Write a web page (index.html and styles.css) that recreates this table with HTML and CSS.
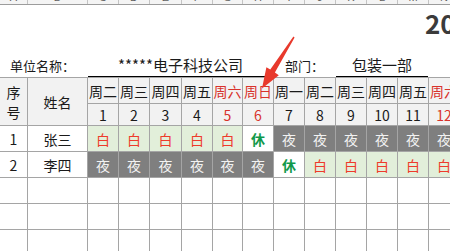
FILE: index.html
```html
<!DOCTYPE html>
<html lang="zh-CN">
<head>
<meta charset="utf-8">
<title>排班表</title>
<link rel="stylesheet" href="styles.css">
</head>
<body>
<div class="sheet">
  <div class="cols colhdr">
    <span><i>A</i></span><span><i>B</i></span><span><i>C</i></span><span><i>D</i></span><span><i>E</i></span><span><i>F</i></span><span><i>G</i></span><span><i>H</i></span><span><i>I</i></span><span><i>J</i></span><span><i>K</i></span><span><i>L</i></span><span><i>M</i></span><span><i>N</i></span>
  </div>
  <div class="title">2020年员工排班表</div>
  <div class="cols info">
    <div class="lbl lbl-unit">单位名称：</div>
    <div class="val val-unit">*****电子科技公司</div>
    <div class="lbl lbl-dept">部门：</div>
    <div class="val val-dept">包装一部</div>
  </div>
  <div class="cols table">
    <div class="c hd seq"><span>序</span><span>号</span></div>
    <div class="c hd name">姓名</div>
    <div class="c hd">周二</div>
    <div class="c hd">周三</div>
    <div class="c hd">周四</div>
    <div class="c hd">周五</div>
    <div class="c hd red">周六</div>
    <div class="c hd red">周日</div>
    <div class="c hd">周一</div>
    <div class="c hd">周二</div>
    <div class="c hd">周三</div>
    <div class="c hd">周四</div>
    <div class="c hd">周五</div>
    <div class="c hd red">周六</div>

    <div class="c hd">1</div>
    <div class="c hd">2</div>
    <div class="c hd">3</div>
    <div class="c hd">4</div>
    <div class="c hd red">5</div>
    <div class="c hd red">6</div>
    <div class="c hd">7</div>
    <div class="c hd">8</div>
    <div class="c hd">9</div>
    <div class="c hd">10</div>
    <div class="c hd">11</div>
    <div class="c hd red">12</div>

    <div class="c">1</div>
    <div class="c">张三</div>
    <div class="c day">白</div>
    <div class="c day">白</div>
    <div class="c day">白</div>
    <div class="c day">白</div>
    <div class="c day">白</div>
    <div class="c rest">休</div>
    <div class="c night">夜</div>
    <div class="c night">夜</div>
    <div class="c night">夜</div>
    <div class="c night">夜</div>
    <div class="c night">夜</div>
    <div class="c night">夜</div>

    <div class="c">2</div>
    <div class="c">李四</div>
    <div class="c night">夜</div>
    <div class="c night">夜</div>
    <div class="c night">夜</div>
    <div class="c night">夜</div>
    <div class="c night">夜</div>
    <div class="c night">夜</div>
    <div class="c rest">休</div>
    <div class="c day">白</div>
    <div class="c day">白</div>
    <div class="c day">白</div>
    <div class="c day">白</div>
    <div class="c day">白</div>

    <div class="c"></div><div class="c"></div><div class="c"></div><div class="c"></div><div class="c"></div><div class="c"></div><div class="c"></div><div class="c"></div><div class="c"></div><div class="c"></div><div class="c"></div><div class="c"></div><div class="c"></div><div class="c"></div>
    <div class="c"></div><div class="c"></div><div class="c"></div><div class="c"></div><div class="c"></div><div class="c"></div><div class="c"></div><div class="c"></div><div class="c"></div><div class="c"></div><div class="c"></div><div class="c"></div><div class="c"></div><div class="c"></div>
    <div class="c"></div><div class="c"></div><div class="c"></div><div class="c"></div><div class="c"></div><div class="c"></div><div class="c"></div><div class="c"></div><div class="c"></div><div class="c"></div><div class="c"></div><div class="c"></div><div class="c"></div><div class="c"></div>
  </div>
  <svg class="arrow" width="450" height="251" viewBox="0 0 450 251" aria-hidden="true">
    <polygon points="294.6,37.4 274.9,72.6 278.8,75.2 262,88.5 266.4,67.2 270.3,69.6 293.4,36.6" fill="#e8392c"/>
  </svg>
</div>
</body>
</html>
```

FILE: styles.css
```css
html, body {
  margin: 0;
  padding: 0;
}
body {
  width: 450px;
  height: 251px;
  overflow: hidden;
  background: #ffffff;
  font-family: "Noto Sans CJK SC", "Noto Sans", sans-serif;
  color: #1a1a1a;
}
.sheet {
  position: relative;
  width: 450px;
  height: 251px;
  overflow: hidden;
}
.cols {
  display: grid;
  grid-template-columns: 27px 59px 30px 30px 31px 30px 29px 30px 30px 30px 30px 30px 30px 30px;
  column-gap: 1px;
}

/* excel column letters strip (cut off) */
.colhdr {
  height: 4px;
  background: #c4c4c4;
  border-bottom: 1px solid #9c9c9c;
}
.colhdr span {
  display: block;
  height: 4px;
  overflow: hidden;
  background: #f4f4f4;
  text-align: center;
}
.colhdr i {
  display: block;
  font-style: normal;
  font-family: "Liberation Sans", sans-serif;
  font-size: 11px;
  line-height: 12px;
  margin-top: -9px;
  color: #606060;
}

.title {
  height: 41px;
  padding: 3px 0 0 425px;
  font-size: 26px;
  font-weight: 700;
  line-height: 30px;
  color: #3b3b3b;
  white-space: nowrap;
}

.info {
  height: 28px;
  align-items: end;
}
.lbl {
  font-size: 13px;
  line-height: 23px;
  white-space: nowrap;
  color: #1a1a1a;
}
.lbl-unit {
  grid-column: 1 / 3;
  padding-left: 10px;
}
.lbl-dept {
  grid-column: 9 / 11;
  padding-left: 11px;
}
.val {
  font-size: 15px;
  line-height: 22px;
  text-align: center;
  border-bottom: 1px solid #000;
  white-space: nowrap;
}
.val-unit {
  grid-column: 3 / 9;
}
.val-dept {
  grid-column: 11 / 14;
}

.table {
  grid-template-rows: 25px 21px 25px 25px 25px 25px 25px;
  row-gap: 1px;
  background: #a5a5a5;
  border-top: 1px solid #a5a5a5;
}
.c {
  display: flex;
  align-items: center;
  justify-content: center;
  background: #ffffff;
  font-size: 14px;
  line-height: 18px;
  white-space: nowrap;
  overflow: hidden;
}
.hd {
  background: #f2f2f2;
}
.seq {
  grid-row: span 2;
  flex-direction: column;
  line-height: 20px;
}
.name {
  grid-row: span 2;
}
.red {
  color: #d8322c;
}
.day {
  background: #e2efda;
  color: #ee3b2b;
}
.night {
  background: #7f7f7f;
  color: #f2f2f2;
}
.rest {
  color: #11994a;
  font-weight: 700;
}

.arrow {
  position: absolute;
  left: 0;
  top: 0;
  pointer-events: none;
}
```
